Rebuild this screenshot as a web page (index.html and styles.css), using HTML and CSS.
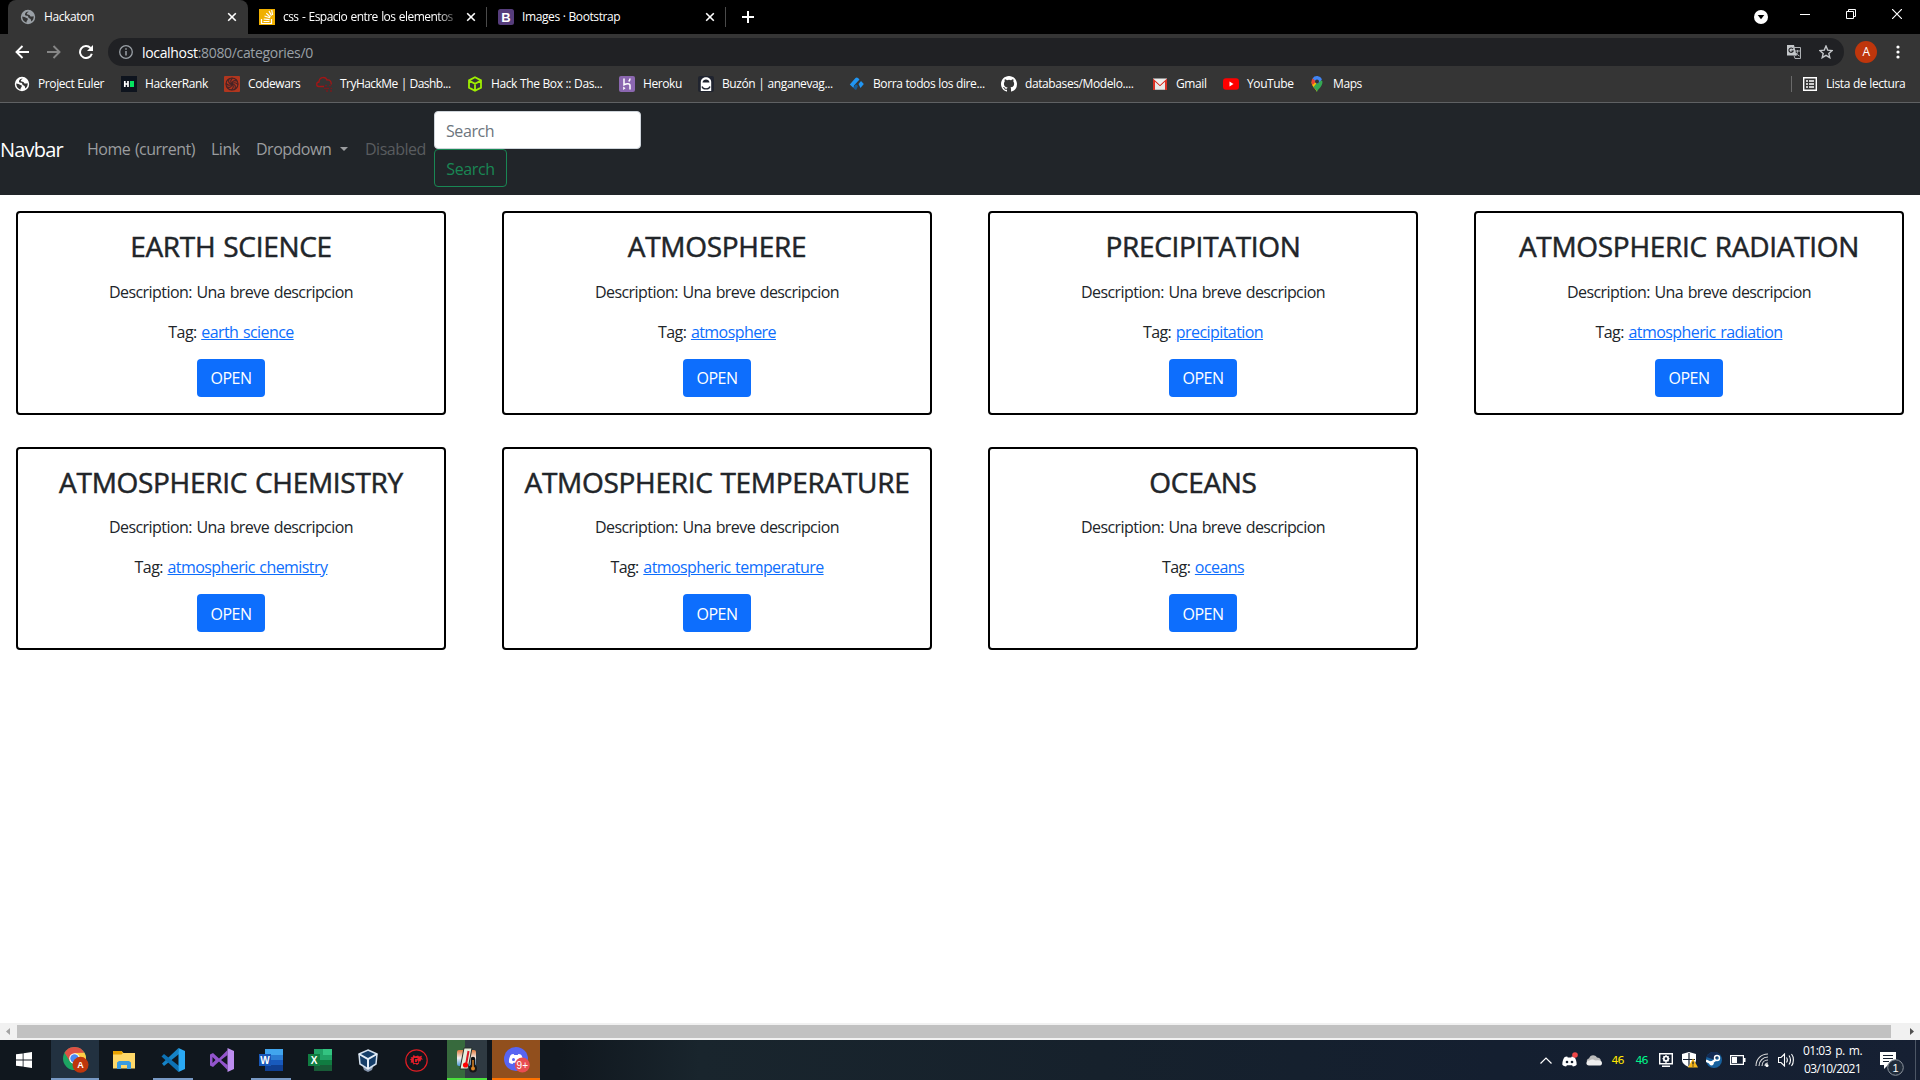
FILE: index.html
```html
<!DOCTYPE html>
<html lang="es">
<head>
<meta charset="utf-8">
<title>Hackaton</title>
<link rel="stylesheet" href="styles.css">
</head>
<body>
<svg class="defs" width="0" height="0">
  <symbol id="globe" viewBox="0 0 16 16"><path fill="currentColor" fill-rule="evenodd" d="M8 .8a7.200 7.200 0 1 0 0 14.400A7.200 7.200 0 0 0 8 .8zM2.300 7.600l2.200.5c1 .2 1.200.7 2.100.8 1.200.2 1.500.8 1 1.800-.6 1-1.200 1.300-1 2.800C4 13 2.100 10.600 2.300 7.600zM8.500 2.400c-.2 1-1.700 1.200-1.700 2.300 0 1 1.800.6 2.600 1.300.9.800.6 1.700 2 1.600.9 0 1.300-.6 2.200-.4.300 2-.6 4.200-2.300 5.400-.3-.9-.2-1.700-.8-2.500-.6-.7-2.200-.8-2.200-2 0-.9-.8-1.200-1.900-1.300C5.200 6.700 4.900 6 5 5c.1-1.300 1.600-2.500 3.500-2.600z"/></symbol>
  <symbol id="x" viewBox="0 0 10 10"><path d="M1.200 1.200l7.600 7.600M8.800 1.200L1.200 8.800" stroke="#fff" stroke-width="1.600"/></symbol>
  <symbol id="discord" viewBox="0 0 16 12"><path d="M5.500.5C4 .7 3 1 2.200 1.600.8 4 .1 6.500.2 9.600 1.300 10.700 2.600 11.300 4.300 11.500L5.200 10h5.600l.9 1.500c1.700-.2 3-.8 4.100-1.900.1-3.100-.6-5.600-2-8C13 1 12 .7 10.500.5l-.6 1.200H6.100z" fill="#fff"/></symbol>
</svg>

<header class="chrome">
  <div class="tabs">
    <div class="tab tab-active"><svg class="i16 grey"><use href="#globe"/></svg><span class="tab-title">Hackaton</span><svg class="i10"><use href="#x"/></svg></div>
    <div class="tab tab-two"><svg class="i16" viewBox="0 0 16 16"><rect width="16" height="16" fill="#f0b000"/><path d="M2.500 10v4.500h10V10M4.500 12.500h6M4.700 10l5.900.6M5.500 7l5.500 1.800M7.300 4.300l4.200 3.800M10 2l2.500 4.600M12.700 1l.9 5" fill="none" stroke="#fff" stroke-width="1.200"/></svg><span class="tab-title fade">css - Espacio entre los elementos</span><svg class="i10"><use href="#x"/></svg></div>
    <div class="tab tab-three"><svg class="i16" viewBox="0 0 16 16"><rect width="16" height="16" rx="2.500" fill="#563d7c"/><text x="8" y="12.500" class="glyph">B</text></svg><span class="tab-title">Images · Bootstrap</span><svg class="i10"><use href="#x"/></svg></div>
    <svg class="new-tab" viewBox="0 0 12 12"><path d="M6 0v12M0 6h12" stroke="#fff" stroke-width="2"/></svg>
    <div class="window-controls">
      <svg width="14" height="14" viewBox="0 0 14 14"><circle cx="7" cy="7" r="7" fill="#fff"/><path d="M3.700 5h6.600L7 9.300z" fill="#000"/></svg>
      <svg class="c-min" width="10" height="10"><path d="M0 5.500h10" stroke="#fff"/></svg>
      <svg class="c-max" width="10" height="10"><path d="M.5 2.500h7v7h-7zM2.500 2.500v-2h7v7h-2" fill="none" stroke="#fff"/></svg>
      <svg class="c-close" width="10" height="10"><path d="M0 0l10 10M10 0L0 10" stroke="#fff" stroke-width="1.200"/></svg>
    </div>
  </div>

  <div class="toolbar">
    <svg class="nav-ico" viewBox="0 0 14 14"><path d="M14 7H1.500M7.500 1L1.500 7l6 6" fill="none" stroke="#fff" stroke-width="1.900"/></svg>
    <svg class="nav-ico" viewBox="0 0 14 14"><path d="M0 7h12.500M6.500 1l6 6-6 6" fill="none" stroke="#868686" stroke-width="1.900"/></svg>
    <svg class="nav-ico" viewBox="0 0 14 14"><path d="M11.500 3A6 6 0 1 0 12.800 8.700" fill="none" stroke="#fff" stroke-width="2"/><path d="M14 0v6H8z" fill="#fff"/></svg>
    <div class="omnibox">
      <svg width="14" height="14" viewBox="0 0 14 14"><circle cx="7" cy="7" r="6.300" fill="none" stroke="#9aa0a6" stroke-width="1.300"/><path d="M7 6v4.500M7 3.300v1.500" stroke="#9aa0a6" stroke-width="1.500"/></svg>
      <span class="url"><b>localhost</b>:8080/categories/0</span>
      <svg class="translate" width="14" height="14" viewBox="0 0 14 14"><path d="M0 0h7l2.500 10.500H0z" fill="#c4c7ca"/><path d="M6 2.500h7.500v11H8l-1-3" fill="none" stroke="#aeb1b4"/><path d="M8 6h5M10.500 5v1c0 2-1 4-2 5M9 8c1 1.500 2 2.300 3.500 3" fill="none" stroke="#aeb1b4"/><path d="M6 4a2.200 2.200 0 1 0 .2 2H4.500" fill="none" stroke="#202124" stroke-width="1.100"/></svg>
      <svg width="14" height="14" viewBox="0 0 14 14"><path d="M7 1l1.700 4.100 4.400.4-3.300 2.900 1 4.300L7 10.400l-3.800 2.300 1-4.300L.9 5.500l4.400-.4z" fill="none" stroke="#c4c7ca" stroke-width="1.400"/></svg>
    </div>
    <span class="avatar">A</span>
    <svg class="dots" width="4" height="14"><circle cx="2" cy="2" r="1.600" fill="#fff"/><circle cx="2" cy="7" r="1.600" fill="#fff"/><circle cx="2" cy="12" r="1.600" fill="#fff"/></svg>
  </div>

  <nav class="bookmarks">
    <a><svg class="i16 white"><use href="#globe"/></svg>Project Euler</a>
    <a><svg class="i16" viewBox="0 0 16 16"><rect width="16" height="16" fill="#0e141e"/><path d="M3.800 5v6M7 5v6M4 8h3" stroke="#fff" stroke-width="1.700"/><path d="M9 5h4v6H9z" fill="#05e560"/></svg>HackerRank</a>
    <a><svg class="i16" viewBox="0 0 16 16"><rect width="16" height="16" rx="1" fill="#b1361e"/><g fill="none" stroke="#442326" stroke-width="1.100"><circle cx="8" cy="8" r="6"/><path id="cw" d="M8 8c0-3 2-4 5-3M8 8c-2-2-1.500-4 .5-6"/><use href="#cw" transform="rotate(90 8 8)"/><use href="#cw" transform="rotate(180 8 8)"/><use href="#cw" transform="rotate(270 8 8)"/></g></svg>Codewars</a>
    <a class="tight"><svg class="i16" viewBox="0 0 16 16"><path d="M8 10.500H2.800C0 10.300 0 6.300 3 6c0-5 6.500-6 8-2 3-.5 4.700 2 4 4.500" fill="none" stroke="#a31616" stroke-width="1.300"/><path d="M9 9.500h2m2 0h2M8 12.500h5m1.500 0H16M10 15h2m2 0h2" stroke="#741b1e" stroke-width="1.300"/></svg>TryHackMe | Dashb...</a>
    <a><svg class="i16" viewBox="0 0 16 16"><path d="M8 1.200l6 3.200v7.200l-6 3.200-6-3.200V4.400zM2 4.600l6 3.200 6-3.200M8 7.800v7" fill="none" stroke="#9fef00" stroke-width="1.800"/></svg>Hack The Box :: Das...</a>
    <a><svg class="i16" viewBox="0 0 16 16"><rect width="16" height="16" rx="2" fill="#8b67b0"/><path d="M5 2.500v6.300c2.500-1.200 6-1.800 6 .8v4M11 2.500c0 1.500-.5 2.200-1.300 3" fill="none" stroke="#fff" stroke-width="1.500"/><path d="M4.200 10.500l2.300 1.700-2.300 1.700z" fill="#fff"/></svg>Heroku</a>
    <a><svg class="i16" viewBox="0 0 16 16"><rect width="16" height="16" rx="2" fill="#20242f"/><path d="M2.800 15V6c0-6.500 10.400-6.500 10.400 0v9z" fill="#fff"/><path d="M4.500 6.500c.2-4 6.800-4 7 0z" fill="#20242f"/><path d="M4 10.500c1 3.200 7 3.200 8 0" fill="none" stroke="#20242f" stroke-width="1.300"/></svg>Buzón | anganevag...</a>
    <a><svg class="i16" viewBox="0 0 16 16"><path d="M.8 8.500L6.500 2c.8-.7 1.700-.7 2.500 0l1.500 1.500L5 9.500 4.500 12z" fill="#2196f3"/><path d="M4.500 12L6 9l1.500-.5L9 10l-1.500 3.500c-1 .7-2 0-3-1.500z" fill="#155b96"/><path d="M9.500 8L12 5l2.800 3-3.300 4z" fill="#2196f3"/></svg>Borra todos los dire...</a>
    <a><svg class="i16" viewBox="0 0 16 16"><path fill="#fff" d="M8 0C3.580 0 0 3.580 0 8c0 3.540 2.290 6.530 5.470 7.590.4.070.55-.17.55-.38v-1.490c-2.010.370-2.530-.49-2.690-.94-.09-.23-.48-.94-.82-1.130-.28-.15-.68-.52-.01-.53.63-.01 1.080.58 1.230.82.72 1.210 1.870.87 2.330.66.070-.52.280-.87.510-1.070-1.780-.2-3.640-.89-3.640-3.950 0-.87.310-1.590.82-2.150-.08-.2-.36-1.020.080-2.120 0 0 .67-.21 2.200.82a7.600 7.600 0 0 1 4 0c1.530-1.040 2.200-.82 2.200-.82.440 1.100.160 1.920.080 2.120.51.560.82 1.270.82 2.150 0 3.070-1.870 3.750-3.650 3.950.29.250.54.730.54 1.480v2.190c0 .21.150.46.550.38A8 8 0 0 0 16 8c0-4.420-3.580-8-8-8z"/></svg>databases/Modelo....</a>
    <a><svg class="i16" viewBox="0 0 16 16"><path d="M1 2.500h14v11H1z" fill="#eee"/><path d="M1 14V2.500L8 9l7-6.500V14h-2V6l-5 4.500L3 6v8z" fill="#d93025"/><path d="M3 13.500V6l5 4.500L13 6v7.500z" fill="#e8e8e8"/></svg>Gmail</a>
    <a><svg class="i16" viewBox="0 0 16 16"><rect y="2.200" width="16" height="11.500" rx="3" fill="#f00"/><path d="M6.500 5.500v5l4-2.500z" fill="#fff"/></svg>YouTube</a>
    <a><svg class="i16" viewBox="0 0 16 16"><path d="M8 16c-.8-3-5.500-5-5.500-10.300l5.500-3z" fill="#fbbc04"/><path d="M8 16c.8-3 5.500-5 5.500-10.500L11 3 4.500 11C6 12.500 7.500 14 8 16z" fill="#34a853"/><path d="M3.500 2.400A5.500 5.500 0 0 1 13 3.200L8.500 8z" fill="#4285f4"/><path d="M3.500 2.400L7 5.500 3.700 9C2.200 7 2.200 4.300 3.500 2.400z" fill="#ea4335"/><circle cx="8" cy="5.500" r="2" fill="#30343a"/></svg>Maps</a>
    <a class="reading"><svg width="14" height="14"><path d="M.7.700h12.600v12.600H.7z" fill="none" stroke="#fff" stroke-width="1.400"/><path d="M3 4h2m1 0h5M3 7h2m1 0h5M3 10h2m1 0h5" stroke="#fff" stroke-width="1.600"/></svg>Lista de lectura</a>
  </nav>
</header>

<nav class="navbar">
  <a class="brand">Navbar</a>
  <a class="n-home">Home (current)</a>
  <a class="n-link">Link</a>
  <a class="n-drop">Dropdown<i class="caret"></i></a>
  <a class="n-disabled">Disabled</a>
  <form class="search"><input class="search-input" placeholder="Search"><button class="search-btn" type="button">Search</button></form>
</nav>

<main class="grid">
  <article class="card"><h3>EARTH SCIENCE</h3><p>Description: Una breve descripcion</p><p>Tag: <a>earth science</a></p><button class="open">OPEN</button></article>
  <article class="card"><h3>ATMOSPHERE</h3><p>Description: Una breve descripcion</p><p>Tag: <a>atmosphere</a></p><button class="open">OPEN</button></article>
  <article class="card"><h3>PRECIPITATION</h3><p>Description: Una breve descripcion</p><p>Tag: <a>precipitation</a></p><button class="open">OPEN</button></article>
  <article class="card"><h3>ATMOSPHERIC RADIATION</h3><p>Description: Una breve descripcion</p><p>Tag: <a>atmospheric radiation</a></p><button class="open">OPEN</button></article>
  <article class="card"><h3>ATMOSPHERIC CHEMISTRY</h3><p>Description: Una breve descripcion</p><p>Tag: <a>atmospheric chemistry</a></p><button class="open">OPEN</button></article>
  <article class="card"><h3>ATMOSPHERIC TEMPERATURE</h3><p>Description: Una breve descripcion</p><p>Tag: <a>atmospheric temperature</a></p><button class="open">OPEN</button></article>
  <article class="card"><h3>OCEANS</h3><p>Description: Una breve descripcion</p><p>Tag: <a>oceans</a></p><button class="open">OPEN</button></article>
</main>

<div class="scrollbar"><svg width="17" height="17"><path d="M10 5v7L6 8.500z" fill="#a3a3a3"/></svg><div class="thumb"></div><svg class="right" width="17" height="17"><path d="M7 5v7l4-3.500z" fill="#505050"/></svg></div>

<footer class="taskbar">
  <div class="app start"><svg width="16" height="16"><path d="M0 2.300L6.700 1.400v6.100H0zM7.500 1.200L16 0v7.500H7.500zM0 8.400h6.700v6.200L0 13.700zM7.500 8.400H16V16l-8.500-1.200z" fill="#fff"/></svg></div>
  <div class="app active"><svg width="26" height="26" viewBox="0 0 26 26"><circle cx="11.500" cy="11.500" r="11.500" fill="#1da462"/><path d="M1.500 5.800A11.500 11.500 0 0 1 21.500 5.800L11.500 6.500 7 14.500z" fill="#dd5144"/><path d="M21.500 5.800A11.500 11.500 0 0 1 11.500 23l5-8.500-5-8.500z" fill="#ffcd46"/><circle cx="11.500" cy="11.500" r="5.300" fill="#fff"/><circle cx="11.500" cy="11.500" r="4.200" fill="#4a8af4"/><circle cx="17.500" cy="17.800" r="8" fill="#bf360c"/><text x="17.500" y="21" class="glyph g9">A</text></svg></div>
  <div class="app"><svg width="22" height="20" viewBox="0 0 22 20"><path d="M0 1h8.500l2 2H22v15.500H0z" fill="#ffd868"/><path d="M0 1h8.500l1.500 2-1.500 1.500H0z" fill="#e8a200"/><path d="M4 19v-6.500L6 11h10l2 1.500V19h-4v-4H8v4z" fill="#3a9be0"/></svg></div>
  <div class="app run"><svg width="24" height="24" viewBox="0 0 24 24"><path d="M17.500 0L1 15.500 3 18 18 6z" fill="#1583c7"/><path d="M18 18L3 6 .5 8.500 17.500 24z" fill="#0d72b5"/><path d="M17.500 0L24 3v18l-6.500 3z" fill="#2aa9f4"/></svg></div>
  <div class="app"><svg width="24" height="24" viewBox="0 0 24 24"><path d="M3 5L0 6.500v11L3 19l6-5.500L17.500 22V2L9 10.500zM2.500 9L5.500 12l-3 3zM17.500 7v10L11 12z" fill="#9355cc" fill-rule="evenodd"/><path d="M17.500 0L24 3v18l-6.500 3z" fill="#bd8df0"/></svg></div>
  <div class="app run"><svg width="24" height="22" viewBox="0 0 24 22"><path d="M6 0h18v6H6z" fill="#41a5ee"/><path d="M6 6h18v5H6z" fill="#2b7cd3"/><path d="M6 11h18v5H6z" fill="#185abd"/><path d="M6 16h18v6H6z" fill="#103f91"/><path d="M0 5h12v12H0z" fill="#1857b8"/><text x="6" y="14.700" class="glyph g10">W</text></svg></div>
  <div class="app"><svg width="24" height="22" viewBox="0 0 24 22"><path d="M6 0h18v22H6z" fill="#21a366"/><path d="M15 0h9v6h-9z" fill="#33c481"/><path d="M6 11h9v5H6zM15 11h9v5h-9z" fill="#107c41"/><path d="M6 16h18v6H6z" fill="#185c37"/><path d="M0 5h12v12H0z" fill="#107c41"/><text x="6" y="14.700" class="glyph g10">X</text></svg></div>
  <div class="app nudge"><svg width="20" height="23" viewBox="0 0 20 23"><path d="M5 18l5-2 5 2-1 3-4 2-4-2z" fill="#8495ad"/><path d="M10 1l9 4-1 10-8 5-8-5L1 5z" fill="#153e69" stroke="#d5e2f0" stroke-width="1.500"/><path d="M1 5l9 5 9-5M10 10v10" fill="none" stroke="#e5eef8" stroke-width="2"/></svg></div>
  <div class="app nudge"><svg width="23" height="23" viewBox="0 0 23 23"><circle cx="11.500" cy="11.500" r="10.700" fill="none" stroke="#df1d24" stroke-width="1.200"/><path d="M5.500 8l2 .3L8.500 6l2 1.300 2.500-.8 1 1 3-.7-.6 2 1.600 1.700h-2l-.3 1.800-2 .2.300 2-2 1.500-1.600-1.200-2 .8-.7-1.800-2.200-.3.800-1.800-1.300-1.500 1.700-1z" fill="#e51e29"/><path d="M12.500 9.500h-3v4h3v-2" fill="none" stroke="#111820" stroke-width="1.200"/></svg></div>
  <div class="app run thermo"><svg width="22" height="26" viewBox="0 0 22 26"><defs><linearGradient id="heat" x2="0" y2="1"><stop stop-color="#e27a3c"/><stop offset=".5" stop-color="#f5f0ee"/><stop offset="1" stop-color="#4f9bd8"/></linearGradient></defs><rect x="1" y="3" width="19" height="16" rx="2" fill="url(#heat)"/><path d="M8 1h8l-4 21H4z" fill="#e6efdc" stroke="#273028"/><path d="M12.500 4L10 18" stroke="#d91825" stroke-width="2"/><circle cx="9.500" cy="18" r="2.600" fill="#f00"/><path d="M17 12v9" stroke="#111" stroke-width="4.500" stroke-linecap="round"/><circle cx="17" cy="21.500" r="4" fill="#161616"/><path d="M17 13v8" stroke="#d98324" stroke-width="1.500"/><circle cx="17" cy="21.500" r="2" fill="#d98324"/></svg></div>
  <div class="app alert"><svg width="26" height="26" viewBox="0 0 26 26"><circle cx="12" cy="12" r="12" fill="#5865f2"/><use href="#discord" x="4.500" y="6.500" width="15" height="11"/><circle cx="9.500" cy="12.500" r="1.500" fill="#5865f2"/><circle cx="18.300" cy="18" r="7.500" fill="#e84c51"/><text x="18.300" y="21.600" class="glyph g10 plain">9+</text></svg></div>

  <div class="tray">
    <span><svg width="12" height="7"><path d="M.5 6.500L6 1l5.500 5.500" fill="none" stroke="#fff" stroke-width="1.200"/></svg></span>
    <span><svg width="16" height="16" viewBox="0 0 16 16"><use href="#discord" x="0" y="4" width="15" height="11"/><circle cx="5" cy="10" r="1.300" fill="#152030"/><circle cx="10" cy="10" r="1.300" fill="#152030"/><circle cx="13" cy="3" r="2.800" fill="#f04747"/></svg></span>
    <span><svg width="16" height="11" viewBox="0 0 16 11"><path d="M3 8C0 8 0 4 3 3.500 4-.5 9-1 11 2.500c2 0 3.500 1 4 3L5 10z" fill="#bcbcbc"/><path d="M3 10.500c-4-.5-3-5 .5-5C6 3.500 8 5 10 5.500c4-1 6 .5 6 2.500s-1 2.500-3 2.500z" fill="#eee"/></svg></span>
    <span class="temp yellow">46</span>
    <span class="temp green">46</span>
    <span><svg width="14" height="14" viewBox="0 0 14 14"><path d="M.7.700h12.600v10H.7zM3 13.300h8" fill="none" stroke="#fff" stroke-width="1.400"/><circle cx="7" cy="5.700" r="2.200" fill="none" stroke="#fff" stroke-width="1.700"/><path d="M7 2v2m0 4v2M3.500 5.700H5m4 0h1.500M4.500 3.200l1 1m3 3l1 1M9.500 3.200l-1 1m-3 3l-1 1" stroke="#fff" stroke-width="1.300"/></svg></span>
    <span><svg width="16" height="16" viewBox="0 0 16 16"><path d="M7 0l7 2v6c0 3-3 5.500-7 7-4-1.500-7-4-7-7V2z" fill="#fff"/><path d="M7 1v13M1 7.500h12" stroke="#152030" stroke-width="1.200"/><path d="M11 6.500l5 9H6z" fill="#f9b81b"/><path d="M11 9.500v3m0 1v1" stroke="#222" stroke-width="1.300"/></svg></span>
    <span><svg width="16" height="16" viewBox="0 0 16 16"><circle cx="8" cy="8" r="8" fill="#17619e"/><path d="M.5 5A8 8 0 0 1 14 2.500L9 8z" fill="#142b55"/><circle cx="11" cy="6" r="2.500" fill="none" stroke="#fff" stroke-width="1.400"/><path d="M0 8.500l5 2.500 5-3.500" fill="none" stroke="#fff" stroke-width="2.500"/><circle cx="5.500" cy="11.300" r="2.200" fill="#fff"/></svg></span>
    <span><svg width="16" height="10"><path d="M.6.600h12.800v8.800H.6z" fill="none" stroke="#fff" stroke-width="1.200"/><path d="M2 2h5v6H2zM14 3h1.500v4H14z" fill="#fff"/></svg></span>
    <span><svg width="14" height="14" viewBox="0 0 14 14"><g fill="none" stroke="#ddd" stroke-width="1.100"><path d="M1 13C1 6 6 1 13 1M4 13c0-5 4-9 9-9M7 13c0-3.500 2.500-6 6-6M10 13c0-2 1-3 3-3"/></g><circle cx="12" cy="12.500" r="1.500" fill="#fff"/></svg></span>
    <span><svg width="16" height="14" viewBox="0 0 16 14"><path d="M.5 4.500H3L6.500 1v12L3 9.500H.5zM8.500 4.500c1 1.500 1 3.500 0 5M11 2.500c2 2.500 2 6.500 0 9M13.500 1c2.500 3 2.500 9 0 12" fill="none" stroke="#fff" stroke-width="1.100"/></svg></span>
  </div>
  <div class="clock"><span class="time">01:03 p. m.</span><span>03/10/2021</span></div>
  <div class="notif"><svg width="25" height="25" viewBox="0 0 25 25"><path d="M0 1h16v13H8l-4 4v-4H0z" fill="#fff"/><path d="M3 4.500h10M3 7.500h10M3 10.500h6" stroke="#152030" stroke-width="1.200"/><circle cx="15.500" cy="16.500" r="7.800" fill="#202b3a" stroke="#8c939d"/><text x="15.500" y="20.700" class="glyph g11 plain">1</text></svg></div>
</footer>
</body>
</html>
```
FILE: styles.css
```css
* { box-sizing: border-box; }
body { margin: 0; width: 1920px; height: 1080px; overflow: hidden; display: flex; flex-direction: column; background: #fff; color: #212529; font-family: "Open Sans", "Noto Sans", sans-serif; font-size: 16px; line-height: 1.5; letter-spacing: -.57px; word-spacing: 1px; }
.defs { position: absolute; }
svg { display: block; flex: none; }
.i16 { width: 16px; height: 16px; }
.i10 { width: 10px; height: 10px; }
.grey { color: #9aa0a6; }
.white { color: #fff; }
.glyph { fill: #fff; font: 700 13px "Liberation Sans", sans-serif; text-anchor: middle; letter-spacing: 0; }
.g9 { font-size: 9px; }
.g10 { font-size: 10px; }
.g11 { font-size: 11px; }
.plain { font-weight: 400; }

/* Browser frame */
.chrome { height: 103px; background: #353535; border-bottom: 1px solid #5f6163; color: #fff; font-size: 12px; letter-spacing: -.4px; word-spacing: .3px; }
.tabs { height: 34px; background: #000; display: flex; align-items: center; padding-left: 8px; }
.tab { height: 34px; display: flex; align-items: center; }
.tab-title { flex: 1; margin: 0 14px 0 8px; white-space: nowrap; overflow: hidden; }
.tab-active { width: 240px; padding: 0 11px 0 12px; background: #353535; border-radius: 8px 8px 0 0; }
.tab-two, .tab-three { width: 239px; padding: 0 10px 0 11px; height: 20px; border-right: 1px solid #4a4a4a; }
.fade { margin-right: 8px; letter-spacing: -.55px; word-spacing: .8px; -webkit-mask-image: linear-gradient(90deg, #000 88%, transparent 102%); mask-image: linear-gradient(90deg, #000 88%, transparent 102%); }
.new-tab { width: 12px; height: 12px; margin-left: 16px; }
.window-controls { margin-left: auto; display: flex; align-items: center; padding-right: 18px; }
.c-min { margin-left: 32px; margin-top: -6px; }
.c-max { margin-left: 36px; margin-top: -6px; }
.c-close { margin-left: 36px; margin-top: -6px; }

.toolbar { height: 36px; display: flex; align-items: center; padding: 0 20px 0 15px; }
.nav-ico { width: 14px; height: 14px; margin-right: 18px; }
.omnibox { width: 1736px; height: 28px; margin-left: -3px; border-radius: 14px; background: #202124; display: flex; align-items: center; padding: 0 11px; }
.url { flex: 1; margin-left: 9px; font-size: 14px; letter-spacing: -.33px; color: #9aa0a6; }
.url b { color: #fff; font-weight: 400; }
.translate { margin-right: 18px; }
.avatar { width: 22px; height: 22px; margin-left: 11px; border-radius: 50%; background: #bf360c; text-align: center; line-height: 22px; }
.dots { margin-left: 19px; }

.bookmarks { height: 28px; display: grid; grid-template-columns: 107px 103px 92px 151px 152px 79px 151px 152px 151px 71px 86px 480px 1fr; align-items: center; padding-left: 14px; }
.bookmarks a { display: flex; align-items: center; gap: 8px; white-space: nowrap; }
.bookmarks .tight { letter-spacing: -.54px; }
.bookmarks .reading { height: 16px; border-left: 1px solid #6a6a6a; padding-left: 11px; gap: 9px; margin-left: 2px; }

/* Site navbar */
.navbar { height: 92px; background: #212529; color: #9b9d9f; display: flex; align-items: center; white-space: nowrap; letter-spacing: -.5px; }
.brand { width: 87px; color: #fff; font-size: 20px; letter-spacing: -.8px; padding-top: 1px; }
.n-home { width: 124px; }
.n-link { width: 45px; }
.n-drop { width: 109px; display: flex; align-items: center; }
.caret { margin-left: 9px; border: 4.800px solid transparent; border-top-color: #9b9d9f; border-bottom: 0; }
.n-disabled { width: 69px; color: #595c5f; }
.search { display: flex; flex-direction: column; align-items: flex-start; }
.search-input { width: 207px; height: 38px; padding: 7px 12px 5px 11px; border: 1px solid #ced4da; border-radius: 4px; font: inherit; letter-spacing: -.4px; }
.search-input::placeholder { color: #6c757d; opacity: 1; }
.search-btn { width: 73px; height: 38px; padding: 1px 0 0; border: 1px solid #198754; border-radius: 4px; background: none; color: #198754; font: inherit; letter-spacing: -.4px; }

/* Category cards */
.grid { flex: 1; display: grid; grid-template-columns: repeat(4, 430px); gap: 32px 56px; padding: 16px; align-content: start; }
.card { border: 2px solid #000; border-radius: 4px; padding: 17px 0 16px; display: flex; flex-direction: column; align-items: center; gap: 16px; }
.card h3, .card p { margin: 0; white-space: nowrap; }
.card h3 { font-size: 28px; font-weight: 500; line-height: 33.600px; letter-spacing: -.3px; -webkit-text-stroke: .5px #212529; }
.card a { color: #0d6efd; text-decoration: underline; }
.open { width: 68px; height: 38px; margin-top: -1px; padding: 1px 0 0; border: 0; border-radius: 4px; background: #0d6efd; color: #fff; font: inherit; letter-spacing: -.5px; }

.scrollbar { height: 17px; background: #f1f1f1; display: flex; align-items: center; }
.thumb { width: 1874px; height: 13px; background: #c1c1c1; }
.right { margin-left: auto; }

/* Taskbar */
.taskbar { height: 40px; display: flex; gap: 1px; background: linear-gradient(90deg, #10171e 0, #10171e 560px, #19252d 700px, #16212c 1100px, #141f30 1500px, #162033 100%); color: #fff; }
.app { width: 48px; height: 40px; display: flex; align-items: center; justify-content: center; }
.start { margin-right: 2px; }
.active { background: #223140; border-bottom: 2px solid #7899c4; padding: 2px 0 0 2px; }
.run { width: 40px; margin: 0 4px; border-bottom: 2px solid #7899c4; padding-top: 2px; }
.nudge { padding-right: 3px; }
.thermo { background: linear-gradient(90deg, #376a3d 45%, #2f3a42 45%); border-color: #4be13c; }
.alert { background: #914f1d; border-bottom: 2px solid #ff7200; padding: 2px 0 0 2px; }
.tray { margin-left: auto; display: grid; grid-template-columns: repeat(11, 24px); align-items: center; justify-items: center; }
.temp { font: 11px "DejaVu Sans", sans-serif; letter-spacing: -1px; padding-right: 1px; }
.yellow { color: #ffe500; }
.green { color: #00f58b; }
.clock { width: 68px; padding: 2px 1px 0 0; display: flex; flex-direction: column; align-items: center; font-size: 12px; line-height: 18px; letter-spacing: -.68px; white-space: nowrap; }
.time { letter-spacing: -.5px; word-spacing: 1.500px; }
.notif { width: 48px; padding: 11px 0 0 12px; border-right: 1px solid #4c5665; margin-right: 4px; }
```
